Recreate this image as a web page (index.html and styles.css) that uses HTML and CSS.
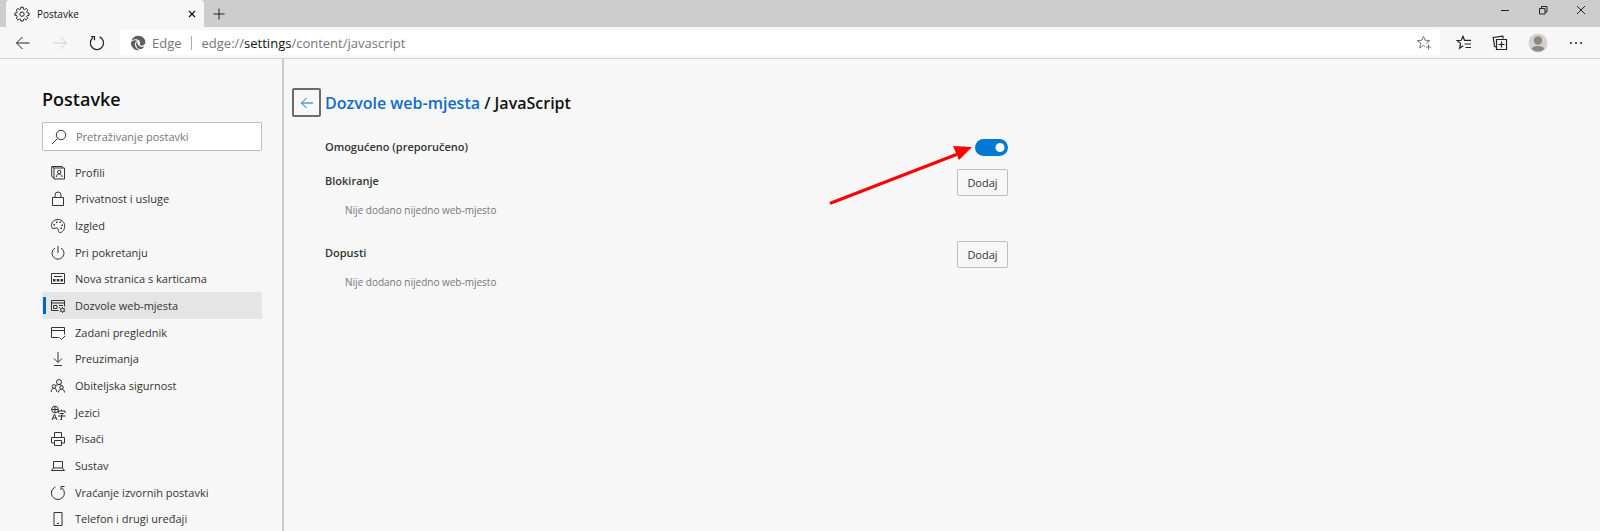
FILE: index.html
```html
<!DOCTYPE html>
<html lang="hr">
<head>
<meta charset="utf-8">
<title>Postavke</title>
<link rel="stylesheet" href="styles.css">
</head>
<body>
<div class="browser">
  <header class="titlebar">
    <div class="tab">
      <svg class="icon" viewBox="0 0 16 16"><path d="M6.8 1.2h2.4l.3 1.9 1.1.5 1.6-1.1 1.6 1.6-1.1 1.6.5 1.1 1.9.3v2.2l-1.9.3-.5 1.1 1.1 1.6-1.6 1.6-1.6-1.1-1.1.5-.3 1.8H6.800l-.3-1.800-1.100-.5-1.600 1.100-1.600-1.600 1.100-1.600-.5-1.100-1.900-.3V7.100l1.900-.3.5-1.100-1.100-1.600 1.600-1.600 1.600 1.100 1.100-.5z"/><circle cx="8" cy="8.200" r="2.200"/></svg>
      <span class="tab-title">Postavke</span>
      <button class="tab-close" aria-label="Zatvori karticu"><svg class="icon-small bold" viewBox="0 0 8 8"><path d="M1 1l6 6M7 1L1 7"/></svg></button>
    </div>
    <button class="new-tab" aria-label="Nova kartica"><svg class="icon-plus" viewBox="0 0 12 12"><path d="M6 .5v11M.5 6h11"/></svg></button>
    <div class="window-controls">
      <button aria-label="Minimiziraj"><svg class="icon-window" viewBox="0 0 10 10"><path d="M1 5.500h8"/></svg></button>
      <button aria-label="Vrati"><svg class="icon-window" viewBox="0 0 10 10"><path d="M1.500 3.500h5.500v5.500H1.500zM3.500 3.500v-2h5.500v5.500H7"/></svg></button>
      <button aria-label="Zatvori"><svg class="icon-window" viewBox="0 0 10 10"><path d="M1 1l8 8M9 1L1 9"/></svg></button>
    </div>
  </header>

  <div class="toolbar">
    <div class="nav-buttons">
      <button aria-label="Natrag"><svg class="icon" viewBox="0 0 16 16"><path d="M14.500 8H1.500M7.500 2L1.500 8l6 6"/></svg></button>
      <button aria-label="Naprijed" disabled><svg class="icon" viewBox="0 0 16 16"><path d="M1 8h13.500M8.500 2l6 6-6 6"/></svg></button>
      <button aria-label="Osvježi"><svg class="icon bold" viewBox="0 0 16 16"><path d="M10.500 1.900A6.600 6.600 0 1 1 4 2.700M2 1.700h3.500v3.500"/></svg></button>
    </div>
    <label class="address">
      <svg class="edge-logo" viewBox="0 0 16 16"><path d="M1.200 6C2.300 2.800 5 .8 8.200.8c4.200 0 7.200 3 7.200 6.200 0 2.300-1.800 3.700-3.800 3.700-1.200 0-2-.4-2-.9 0-.4.500-.7.500-1.700C10.100 6 8.200 4.300 5.700 4.300c-2 0-3.600.7-4.500 1.700z"/><path d="M.8 8.200c.3-1.800 2-2.900 4.200-2.900.9 0 1.700.2 2.300.5-1.500.7-2.300 2.100-2.300 3.700 0 2.700 2 4.900 4.700 5.500A7.200 7.200 0 0 1 .8 8.200z"/><path d="M6.100 9.300c0-1.200.6-2.200 1.400-2.700C6.900 9.300 9 11.900 12 11.900c1 0 1.700-.3 2.400-.7-.9 1.700-2.400 2.900-4 2.900-2.400 0-4.300-2.200-4.300-4.800z"/></svg>
      <span class="scheme">Edge</span>
      <span class="address-url" role="textbox" tabindex="0">edge://<b>settings</b>/content/javascript</span>
      <button aria-label="Dodaj u favorite" class="favorite"><svg class="icon" viewBox="0 0 16 16"><path d="M9 11.500l-1.500-1.100L3.600 13l1.200-4.700L1.200 5.600l4.500-.3L7.500 1.300l1.700 4 4.500.3-3.300 2.700M12.500 9.500v5M10 12h5"/></svg></button>
    </label>
    <div class="tools">
      <button aria-label="Favoriti"><svg class="icon bold" viewBox="0 0 16 16"><path d="M7.300 10.800L3.600 13.300l1-4.800L1.200 5.600l4.100-.3L7 1.300l1.500 4H15M8.500 9H15M9.500 12.500H15"/></svg></button>
      <button aria-label="Zbirke"><svg class="icon bold" viewBox="0 0 16 16"><path d="M4.500 4.500h10v10h-10zM9.500 6.500v6M6.500 9.500h6M4 12l-1.500-.8L1.200 2.500l9.600-1.300.4 2.300"/></svg></button>
      <button aria-label="Profil"><svg class="avatar" viewBox="0 0 20 20"><circle class="avatar-bg" cx="10" cy="10" r="9.500"/><circle cx="10" cy="7.500" r="4.200"/><path d="M3.500 16a6.700 4 0 0 1 13 0 9.500 9.500 0 0 1-13 0z"/></svg></button>
      <button aria-label="Postavke i ostalo"><svg class="icon dots" viewBox="0 0 16 16"><circle cx="3" cy="8" r="1"/><circle cx="8" cy="8" r="1"/><circle cx="13" cy="8" r="1"/></svg></button>
    </div>
  </div>

  <div class="page">
    <aside class="sidebar">
      <h1>Postavke</h1>
      <label class="search">
        <svg class="icon" viewBox="0 0 16 16"><circle cx="10" cy="6" r="4.700"/><path d="M6.500 9.500l-5.500 5.500"/></svg>
        <input type="text" placeholder="Pretraživanje postavki" aria-label="Pretraživanje postavki">
      </label>
      <nav class="menu">
        <a href="#"><svg class="icon" viewBox="0 0 16 16"><path d="M4 3h10.500v11H4zM4 13L1.700 11.500V1.500h10.500l1 1.500M2 1.500L4 3"/><circle cx="9.200" cy="7" r="1.700"/><path d="M6.300 12c.2-4 5.600-4 5.800 0"/></svg>Profili</a>
        <a href="#"><svg class="icon" viewBox="0 0 16 16"><path d="M2.500 6.500h11v8h-11zM5 6.500V4a3 3 0 0 1 6 0v2.500"/></svg>Privatnost i usluge</a>
        <a href="#"><svg class="icon" viewBox="0 0 16 16"><path d="M1.500 6.500C2 3 5 1.500 8 1.500c4 0 6.700 3 6.700 6.500 0 4-2.500 6.500-4.500 6.500-3 0-1-3.500-3-4.500-1.500-.6-2.700 1-4.200.4C1.500 9.800 1.300 8 1.500 6.500z"/><path class="solid" d="M3.500 6h1.500v1.500H3.500zM6 3.500h1.500V5H6zM9.500 3.500H11V5H9.500zM11.500 6.500H13V8h-1.500zM10.500 9.500H12V11h-1.500z"/></svg>Izgled</a>
        <a href="#"><svg class="icon" viewBox="0 0 16 16"><path d="M5 3a6 6 0 1 0 6 0M8 1v7"/></svg>Pri pokretanju</a>
        <a href="#"><svg class="icon" viewBox="0 0 16 16"><path d="M1.500 2.500h13v10h-13zM4 5.500h8"/><path class="solid" d="M3 8h2.500v2.500H3zM6.800 8h2.500v2.500H6.800zM10.500 8H13v2.500h-2.500z"/></svg>Nova stranica s karticama</a>
        <a href="#" class="active" aria-current="page"><svg class="icon" viewBox="0 0 16 16"><path d="M8.500 12.500h-7v-10h13v6M1.500 5h13M3.500 7.500H7v3H3.500zM9 7.500h4M9 9.500h1"/><circle cx="12.500" cy="12" r="1.800"/><path d="M12.500 9v1M12.500 14v1M9.800 10.500l1 .6M14.200 13l1 .6M9.800 13.600l1-.6M14.200 11l1-.5"/></svg>Dozvole web-mjesta</a>
        <a href="#"><svg class="icon" viewBox="0 0 16 16"><path d="M8.500 12.500h-7v-10h13v7M1.500 5.500h13M9.500 12.500l2 2L15 11"/></svg>Zadani preglednik</a>
        <a href="#"><svg class="icon" viewBox="0 0 16 16"><path d="M8 1v10.500M4 7.500l4 4 4-4M4 14.500h8"/></svg>Preuzimanja</a>
        <a href="#"><svg class="icon" viewBox="0 0 16 16"><circle cx="9" cy="4" r="2.500"/><circle cx="4" cy="8.500" r="1.800"/><circle cx="11.500" cy="9.500" r="1.800"/><path d="M1.200 14c0-5 5.500-5 5.600 0M8.500 14.500c0-4.500 6-4.500 6 0M5.500 8c.5-1.500 6-2.500 7 .5"/></svg>Obiteljska sigurnost</a>
        <a href="#"><svg class="icon" viewBox="0 0 16 16"><circle cx="5" cy="4.500" r="3.300"/><path d="M1.700 4.500h6.600M5 1.200v6.600M2 15l2.500-6L7 15M3 13h3M11.500 4.500V6M8.500 8V6H15v2M9.500 8.500h4L11.500 10v4.500H10M8 11h7.500"/></svg>Jezici</a>
        <a href="#"><svg class="icon" viewBox="0 0 16 16"><path d="M4.500 6.500v-5h7v5M4.500 12h-3V6.500h13V12h-3M4.500 9.500h7v5h-7z"/></svg>Pisači</a>
        <a href="#"><svg class="icon" viewBox="0 0 16 16"><path d="M3.500 3.500h9V10h-9zM3.500 10l-2 2.500h13l-2-2.500"/></svg>Sustav</a>
        <a href="#"><svg class="icon" viewBox="0 0 16 16"><path d="M5.500 2A6.500 6.500 0 1 0 12 3M14.500 1.500H11V5"/></svg>Vraćanje izvornih postavki</a>
        <a href="#"><svg class="icon" viewBox="0 0 16 16"><path d="M4 1.500h8v13H4zM7 12.500h2"/></svg>Telefon i drugi uređaji</a>
      </nav>
    </aside>

    <main class="content">
      <div class="content-head">
        <button class="back" aria-label="Natrag"><svg class="icon-back" viewBox="0 0 14 14"><path d="M13 7H1.500M6.500 2l-5 5 5 5"/></svg></button>
        <h2><a href="#">Dozvole web-mjesta</a> / JavaScript</h2>
      </div>
      <div class="settings">
        <div class="row">
          <label for="js-enabled">Omogućeno (preporučeno)</label>
          <input class="toggle" id="js-enabled" type="checkbox" role="switch" checked>
          <svg class="pointer" viewBox="0 0 144 60"><path d="M2 57L130 7.500" class="shaft"/><path class="head" d="M124 0l19 1-13 13z"/></svg>
        </div>
        <section class="list">
          <div class="list-head"><h3>Blokiranje</h3><button class="add">Dodaj</button></div>
          <p>Nije dodano nijedno web-mjesto</p>
        </section>
        <section class="list">
          <div class="list-head"><h3>Dopusti</h3><button class="add">Dodaj</button></div>
          <p>Nije dodano nijedno web-mjesto</p>
        </section>
      </div>
    </main>
  </div>
</div>
</body>
</html>
```
FILE: styles.css
```css
* { box-sizing: border-box; }

body {
  margin: 0;
  background: #f7f7f7;
  color: #333;
  font-family: "Open Sans", "Noto Sans", sans-serif;
  font-size: 11px;
  line-height: 20px;
}

button {
  display: inline-flex;
  align-items: center;
  justify-content: center;
  padding: 0;
  border: 0;
  background: none;
  color: inherit;
  font: inherit;
}

a { color: inherit; text-decoration: none; }
h1, h2, h3, p { margin: 0; font-weight: 600; }

svg { display: block; flex: none; fill: none; stroke: currentColor; }
.icon { width: 16px; height: 16px; }
.icon-small { width: 8px; height: 8px; }
.icon-window { width: 10px; height: 10px; }
.icon-plus { width: 12px; height: 12px; }
.icon-back { width: 14px; height: 14px; }
.bold { stroke-width: 1.2; }
.solid, .dots { fill: currentColor; stroke: none; }

.browser {
  display: flex;
  flex-direction: column;
  height: 100vh;
  overflow: hidden;
}

/* Title bar */
.titlebar {
  display: flex;
  flex: none;
  height: 27px;
  padding-left: 6px;
  background: #cdcdcd;
  color: #222;
}
.tab {
  display: flex;
  align-items: center;
  gap: 7px;
  width: 198px;
  padding: 0 8px;
  border-radius: 4px 4px 0 0;
  background: #f7f7f7;
}
.tab-title { flex: 1; font-size: 10px; color: #111; }
.new-tab { width: 30px; }
.tab-close { color: #111; width: 8px; }
.window-controls { display: flex; margin-left: auto; height: 19px; }
.window-controls button { width: 38px; }

/* Toolbar */
.toolbar {
  display: flex;
  flex: none;
  align-items: center;
  height: 32px;
  border-bottom: 1px solid #d4d4d4;
  color: #222;
}
.nav-buttons { display: flex; gap: 21px; padding: 0 15px; }
.nav-buttons button:disabled { color: #d0d0d0; }
.address {
  display: flex;
  align-items: center;
  flex: 1;
  height: 25px;
  padding: 0 8px 0 10px;
  border-radius: 4px;
  background: #fff;
  color: #767676;
  font-size: 13px;
}
.edge-logo { width: 16px; height: 16px; fill: #606060; stroke: none; }
.scheme { margin: 0 9px 0 6px; }
.address-url {
  flex: 1;
  display: flex;
  align-items: center;
}
.address-url::before {
  content: "";
  height: 14px;
  margin-right: 10px;
  border-left: 1px solid #aaa;
}
.address-url b { color: #111; font-weight: 400; }
.tools { display: flex; align-items: center; gap: 20px; padding: 0 16px; }
.avatar { width: 20px; height: 20px; fill: #8d8782; stroke: none; }
.avatar-bg { fill: #d3d0cd; }

/* Page */
.page { display: flex; flex: 1; min-height: 0; }
.sidebar {
  flex: none;
  width: 284px;
  padding: 26px 20px 0 42px;
  border-right: 2px solid #cacaca;
  overflow: auto;
  scrollbar-width: none;
}
h1 {
  margin-bottom: 9px;
  color: #111;
  font-size: 18px;
  line-height: 28px;
}
.search {
  display: flex;
  align-items: center;
  gap: 9px;
  height: 29px;
  margin-bottom: 8px;
  padding-left: 8px;
  border: 1px solid #bebebe;
  border-radius: 2px;
  background: #fff;
}
.search input {
  flex: 1;
  min-width: 0;
  padding: 0;
  border: 0;
  outline: 0;
  background: none;
  font: inherit;
}
.search input::placeholder { color: #767676; }

.menu a {
  display: flex;
  align-items: center;
  gap: 9px;
  height: 27px;
  padding-left: 8px;
}
.menu a:nth-child(3n + 2) { height: 26px; }
.menu .active {
  border-radius: 2px;
  background: linear-gradient(#0067c0, #0067c0) 1px 50% / 3px 17px no-repeat #e5e5e5;
}

/* Content */
.content { flex: 1; padding: 29px 8px 0; }
.content-head { display: flex; align-items: center; gap: 4px; }
.back {
  width: 29px;
  height: 29px;
  border: 2px solid #6b6b6b;
  border-radius: 2px;
  color: #0078d4;
}
h2 { color: #111; font-size: 16px; }
h2 a { color: #0f6cca; }

.settings { max-width: 716px; padding: 15px 0 0 33px; }
.row {
  position: relative;
  display: flex;
  align-items: center;
  justify-content: space-between;
  height: 30px;
  margin-bottom: 7px;
  font-weight: 600;
}
.toggle {
  appearance: none;
  width: 33px;
  height: 17px;
  margin: 0;
  border-radius: 9px;
  background: radial-gradient(circle at 25px 50%, #fff 4px, #0078d4 5px);
}
.pointer {
  position: absolute;
  right: 35px;
  top: 14px;
  width: 144px;
  height: 60px;
  pointer-events: none;
}
.shaft { stroke: #f00; stroke-width: 3; stroke-linecap: round; }
.head { fill: #f00; stroke: none; }

.list { margin-bottom: 21px; }
.list-head { display: flex; justify-content: space-between; }
h3 { padding-top: 2px; font-size: 11px; }
.add {
  width: 51px;
  height: 27px;
  border: 1px solid #bebebe;
  border-radius: 2px;
}
.list p {
  padding: 4px 0 0 20px;
  color: #767676;
  font-size: 10px;
  font-weight: 400;
}
```
